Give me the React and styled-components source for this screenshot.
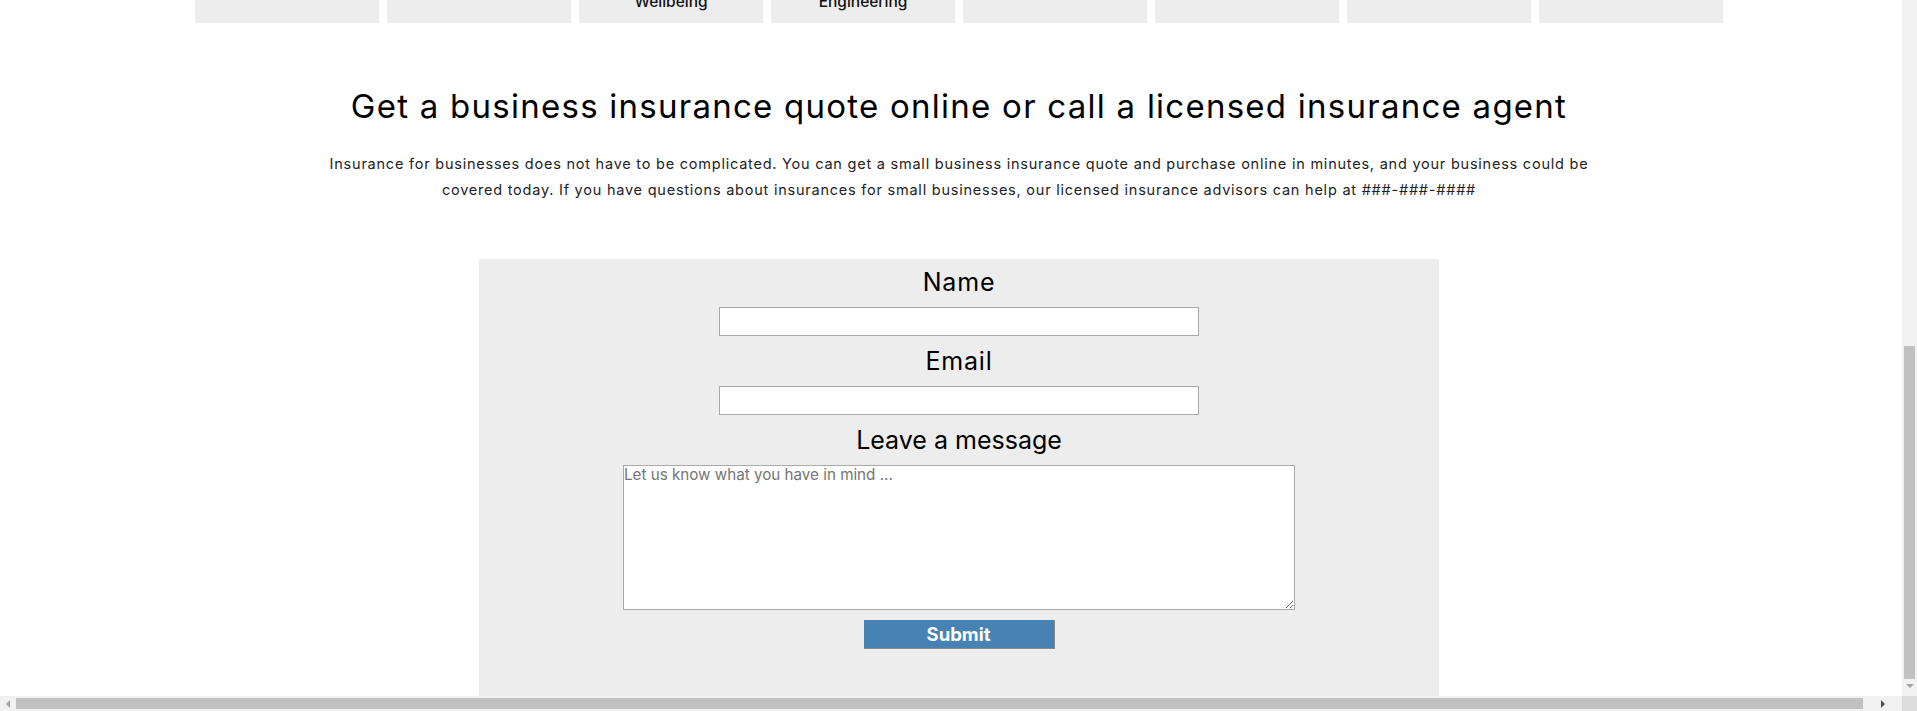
import React from "react";
import styled, { createGlobalStyle } from "styled-components";

const GlobalStyle = createGlobalStyle`
  html, body {
    margin: 0;
    padding: 0;
    overflow: hidden;
    background: #fff;
  }
  body {
    font-family: "Inter", "Open Sans", sans-serif;
    color: #000;
  }
`;

const Frame = styled.div`
  display: grid;
  grid-template-columns: 1fr 15px;
  grid-template-rows: 1fr 15px;
  width: 1917px;
  height: 711px;
`;

const Viewport = styled.div`
  overflow: hidden;
  position: relative;
`;

// page is a bit wider than the viewport and scrolled down a bit
const Page = styled.div`
  width: 1918px;
  margin-top: -77px;
  display: flex;
  flex-direction: column;
  align-items: center;
`;

const CardRow = styled.div`
  display: flex;
  gap: 8px;
`;

const Card = styled.div`
  width: 184px;
  height: 100px;
  background: #ededed;
  display: flex;
  flex-direction: column;
  justify-content: flex-end;
  align-items: center;
  padding-bottom: 12px;
  box-sizing: border-box;
  font-size: 15.5px;
  line-height: 18px;
  font-weight: 500;
  color: #111;
`;

const Title = styled.h2`
  margin: 64px 0 0;
  font-size: 33px;
  line-height: 39px;
  font-weight: 400;
  letter-spacing: 1.25px;
  text-align: center;
`;

const Intro = styled.p`
  width: 1275px;
  margin: 25px 0 0;
  font-size: 14.5px;
  line-height: 26px;
  color: #222;
  text-align: center;
  letter-spacing: 0.77px;
`;

const FormBox = styled.form`
  width: 960px;
  margin-top: 56px;
  padding: 8px 0 60px;
  background: #ededed;
  display: flex;
  flex-direction: column;
  align-items: center;
  gap: 10px;
`;

const Label = styled.label`
  font-size: 25px;
  line-height: 30px;
  font-weight: 400;
  letter-spacing: ${(p) => (p.wide ? "0.8px" : "0")};
`;

const TextInput = styled.input`
  width: 50%;
  height: 29px;
  box-sizing: border-box;
  border: 1px solid #a9a9a9;
  background: #fff;
  margin: 0;
`;

const Message = styled.textarea`
  width: 70%;
  height: 145px;
  box-sizing: border-box;
  border: 1px solid #a9a9a9;
  padding: 0;
  margin: 0;
  font-family: "Inter", sans-serif;
  font-size: 15.2px;
  line-height: 18px;
  &::placeholder {
    color: #757575;
  }
`;

const SubmitButton = styled.button`
  width: 191px;
  height: 29px;
  background: #4682b4;
  color: #fff;
  border: none;
  border-right: 1px solid #8a8a8a;
  border-bottom: 1px solid #8a8a8a;
  font-family: "Inter", sans-serif;
  font-size: 18.5px;
  font-weight: 700;
  padding: 0;
`;

const VTrack = styled.div`
  background: #f1f1f1;
  display: flex;
  flex-direction: column;
  padding: 346px 0 0 2px;
  box-sizing: border-box;
`;

const VThumb = styled.div`
  width: 11px;
  height: 333px;
  background: #c1c1c1;
`;

const Arrow = styled.div`
  width: 0;
  height: 0;
  border-style: solid;
  border-color: transparent;
  ${(p) =>
    p.dir === "down" &&
    `border-width: 4px 4px 0 4px; border-top-color: ${p.color};`}
  ${(p) =>
    p.dir === "left" &&
    `border-width: 4px 4px 4px 0; border-right-color: ${p.color};`}
  ${(p) =>
    p.dir === "right" &&
    `border-width: 4px 0 4px 4px; border-left-color: ${p.color};`}
`;

const DownSlot = styled.div`
  display: flex;
  justify-content: center;
  margin-top: 5px;
  padding-right: 2px;
`;

const HTrack = styled.div`
  background: #f1f1f1;
  display: flex;
  align-items: center;
`;

const ArrowSlot = styled.div`
  width: ${(p) => p.w}px;
  display: flex;
  justify-content: center;
`;

const HThumb = styled.div`
  flex: 1;
  height: 11px;
  background: #c1c1c1;
`;

const Corner = styled.div`
  background: #dcdcdc;
`;

const cards = ["", "", "Wellbeing", "Engineering", "", "", "", ""];

export default function App() {
  return (
    <>
      <GlobalStyle />
      <Frame>
        <Viewport>
          <Page>
            <CardRow>
              {cards.map((label, i) => (
                <Card key={i}>{label}</Card>
              ))}
            </CardRow>
            <Title>
              Get a business insurance quote online or call a licensed insurance agent
            </Title>
            <Intro>
              Insurance for businesses does not have to be complicated. You can get a small
              business insurance quote and purchase online in minutes, and your business could be
              covered today. If you have questions about insurances for small businesses, our
              licensed insurance advisors can help at ###-###-####
            </Intro>
            <FormBox onSubmit={(e) => e.preventDefault()}>
              <Label htmlFor="name" wide>
                Name
              </Label>
              <TextInput id="name" type="text" />
              <Label htmlFor="email" wide>
                Email
              </Label>
              <TextInput id="email" type="email" />
              <Label htmlFor="msg">Leave a message</Label>
              <Message id="msg" placeholder="Let us know what you have in mind ..." />
              <SubmitButton type="submit">Submit</SubmitButton>
            </FormBox>
          </Page>
        </Viewport>
        <VTrack>
          <VThumb />
          <DownSlot>
            <Arrow dir="down" color="#a3a3a3" />
          </DownSlot>
        </VTrack>
        <HTrack>
          <ArrowSlot w={16}>
            <Arrow dir="left" color="#a3a3a3" />
          </ArrowSlot>
          <HThumb />
          <ArrowSlot w={39}>
            <Arrow dir="right" color="#505050" />
          </ArrowSlot>
        </HTrack>
        <Corner />
      </Frame>
    </>
  );
}
